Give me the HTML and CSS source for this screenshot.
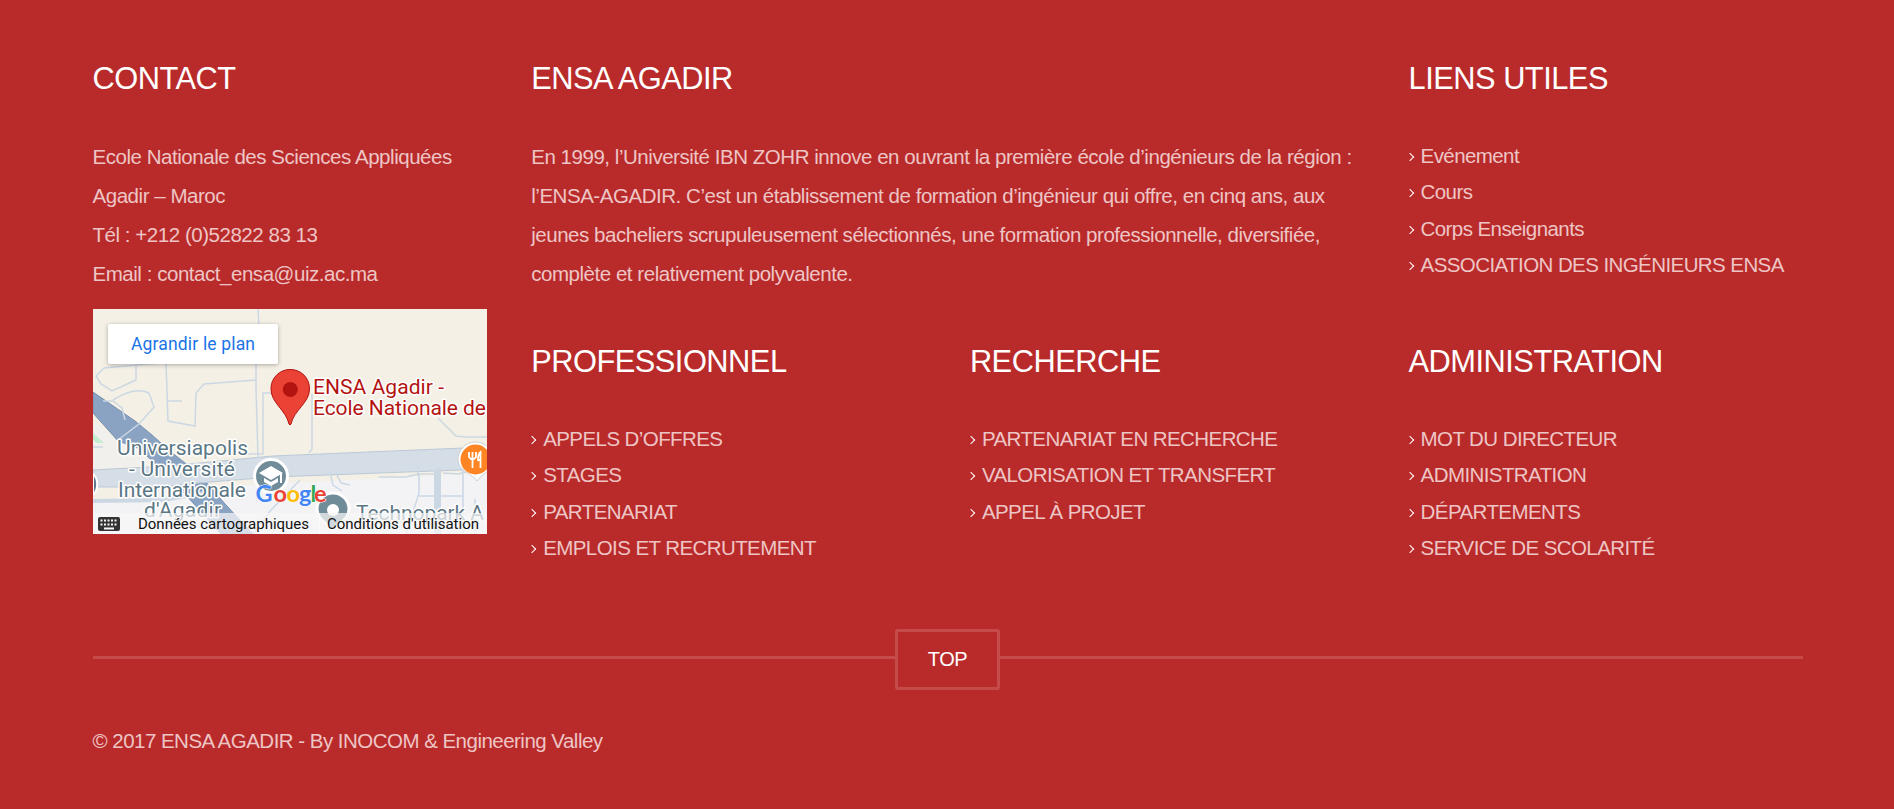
FILE: index.html
```html
<!DOCTYPE html>
<html lang="fr">
<head>
<meta charset="utf-8">
<title>ENSA Agadir</title>
<link rel="stylesheet" href="styles.css">
</head>
<body>
<footer class="footer">
  <div class="grid">
    <section class="contact">
      <h3>CONTACT</h3>
      <p>Ecole Nationale des Sciences Appliquées<br>Agadir – Maroc<br>Tél : +212 (0)52822 83 13<br>Email : contact_ensa@uiz.ac.ma</p>
      <svg class="map" viewBox="0 0 394 225" width="394" height="225">
        <rect width="394" height="225" fill="#f5f0e5"/>
        <path d="M0 194L115 178L394 164V225H0Z" fill="#f3f3f5"/>
        <path d="M0 112L10 119L29 133L60 150V154L0 163Z" fill="#f2f0ec"/>
        <path d="M0 124L11 134L4 134L0 131Z" fill="#c3eed2"/>
        <path d="M0 83L42 112L59 126L78 143L106 165L133 196L160 225H128L101 195L74 165L45 139L25 132L0 104Z" fill="#8aa3c2" stroke="#7891b1"/>
        <path d="M0 161L75 157L180 147L394 138V160L180 168L105 174L70 178L0 178Z" fill="#d5dde6" stroke="#bac9d7"/>
        <path d="M0 192L70 191L113 184M346 159V225M343 161V225" fill="none" stroke="#cbd7e3" stroke-width="4"/>
        <g fill="none" stroke="#cbd8e4" stroke-width="1.5">
          <path d="M165 0L166 18M163 54V80L165 149M67 54L11 59L3 67L8 75L19 82L43 71V57M73 54L75 112L102 117L103 84L111 75L163 71M75 92H89"/>
          <path d="M10 92H20L29 99L32 111M20 91Q42 77 56 84L61 98L46 115L25 131M178 84H170V145H154M219 85V140L216 144M345 109L363 127L373 128H394"/>
          <path d="M160 225L178 201L207 171M243 164L248 174L257 176M237 163L240 176L249 182M286 168H313L325 165H342M325 157V167M350 164L365 165L394 158M313 225L326 184V165M326 187H370V160M370 187V225M382 190V225M0 138H10"/>
        </g>
        <path d="M0 165Q5 169 4 178Q3 184 0 185Z" fill="#62798b" stroke="#fff" stroke-width="2"/>
        <circle cx="178" cy="167" r="16.5" fill="#718c99" stroke="#fff" stroke-width="3"/>
        <path d="M178 157L190 164L178 171L166 164ZM171 169V173L178 177L185 173V169L178 173Z" fill="#fff"/><path d="M188 165V174" stroke="#fff" stroke-width="2"/>
        <path d="M240 184A16 16 0 0 1 256 200C256 210 247 213 240 222C233 213 224 210 224 200A16 16 0 0 1 240 184Z" fill="#718c99" stroke="#fff" stroke-width="3"/>
        <circle cx="240" cy="201" r="6" fill="#fff"/>
        <path d="M382 133A17.5 17.5 0 0 1 400 151C400 162 389 164 384 172C380 165 365 162 365 151A17.5 17.5 0 0 1 382 133Z" fill="#fff" stroke="#cbd0d5"/>
        <circle cx="382.500" cy="150.500" r="15" fill="#ff8524"/>
        <path d="M376 143V148Q379.500 153 383 148V143M379.500 143V159M387.500 159V143Q385 145 385 151H388" fill="none" stroke="#fff" stroke-width="1.800"/>
        <g class="poi">
          <text x="24" y="146" textLength="131">Universiapolis</text>
          <text x="36" y="167" textLength="106">- Université</text>
          <text x="25" y="188" textLength="128">Internationale</text>
          <text x="51" y="208" textLength="77">d'Agadir</text>
          <text x="263" y="211" textLength="128">Technopark A</text>
        </g>
        <path d="M197 60.500A19 19 0 0 1 216.500 80C216.500 94 201 101 198 115Q197 117 196 115C193 101 178 94 178 80A19 19 0 0 1 197 60.500Z" fill="#ea4335" stroke="#b31412"/>
        <circle cx="197.300" cy="80.500" r="7.500" fill="#b31412"/>
        <g class="place">
          <text x="220" y="85" textLength="131">ENSA Agadir -</text>
          <text x="220" y="106" textLength="173">Ecole Nationale de</text>
        </g>
        <rect y="204" width="394" height="21" fill="#f7f7f7" opacity=".72"/>
        <g class="google">
          <text x="162.500" y="193" fill="#4285f4">G</text><text x="180.500" y="193" fill="#ea4335">o</text><text x="193.500" y="193" fill="#fbbc04">o</text><text x="206" y="193" fill="#4285f4">g</text><text x="217.500" y="193" fill="#34a853">l</text><text x="221" y="193" fill="#ea4335">e</text>
        </g>
        <rect x="5" y="208" width="22" height="14" rx="2" fill="#333"/>
        <path d="M7.500 211.500H25M7.500 215.500H25" stroke="#f7f7f7" stroke-width="2" stroke-dasharray="2 1.500"/><path d="M11 219.500H21" stroke="#f7f7f7" stroke-width="2"/>
        <path d="M226.500 204V225" stroke="#fff" stroke-opacity=".6"/>
        <g class="legal"><text x="45" y="220" textLength="171">Données cartographiques</text><text x="234" y="220" textLength="152">Conditions d'utilisation</text></g>
        <rect class="button" x="15" y="15" width="170" height="40" rx="2" fill="#fff"/>
        <text class="enlarge" x="38" y="41" textLength="124">Agrandir le plan</text>
      </svg>
    </section>
    <section class="about">
      <h3>ENSA AGADIR</h3>
      <p>En 1999, l’Université IBN ZOHR innove en ouvrant la première école d’ingénieurs de la région :<br>l’ENSA-AGADIR. C’est un établissement de formation d’ingénieur qui offre, en cinq ans, aux<br>jeunes bacheliers scrupuleusement sélectionnés, une formation professionnelle, diversifiée,<br>complète et relativement polyvalente.</p>
    </section>
    <section>
      <h3>LIENS UTILES</h3>
      <ul><li>Evénement</li><li>Cours</li><li>Corps Enseignants</li><li>ASSOCIATION DES INGÉNIEURS ENSA</li></ul>
    </section>
    <section>
      <h3>PROFESSIONNEL</h3>
      <ul><li>APPELS D’OFFRES</li><li>STAGES</li><li>PARTENARIAT</li><li>EMPLOIS ET RECRUTEMENT</li></ul>
    </section>
    <section>
      <h3>RECHERCHE</h3>
      <ul><li>PARTENARIAT EN RECHERCHE</li><li>VALORISATION ET TRANSFERT</li><li>APPEL À PROJET</li></ul>
    </section>
    <section>
      <h3>ADMINISTRATION</h3>
      <ul><li>MOT DU DIRECTEUR</li><li>ADMINISTRATION</li><li>DÉPARTEMENTS</li><li>SERVICE DE SCOLARITÉ</li></ul>
    </section>
  </div>
  <div class="divider"><a class="top">TOP</a></div>
  <div class="copyright">© 2017 ENSA AGADIR - By INOCOM &amp; Engineering Valley</div>
</footer>
</body>
</html>
```
FILE: styles.css
```css
* { box-sizing: border-box; }
body { margin: 0; background: #b92b2b; }
.footer {
  height: 809px;
  padding: 59px 91.5px 0 92.5px;
  font: 20.5px/39px "Liberation Sans", Arial, sans-serif;
  letter-spacing: -.46px;
  color: #eec5c5;
}
.grid {
  display: grid;
  grid-template-columns: repeat(4, 394px);
  grid-template-rows: 283px 287px;
  column-gap: 44.7px;
}
.contact { grid-row: span 2; }
.about { grid-column: span 2; }
h3 {
  margin: 0 0 39px;
  font-size: 30.8px;
  line-height: 39px;
  font-weight: 400;
  letter-spacing: -.5px;
  color: #fff;
}
p { margin: 0; white-space: nowrap; }
ul { margin: 0; padding: 0; list-style: none; letter-spacing: -.58px; }
li { display: flex; align-items: center; height: 36.5px; white-space: nowrap; }
li::before {
  content: "";
  width: 5px;
  height: 5px;
  margin: 3px 8px 0 -2px;
  border: solid #fff;
  border-width: 1.5px 1.5px 0 0;
  transform: rotate(45deg);
}
.map { display: block; margin-top: 16px; font-family: Roboto, sans-serif; letter-spacing: 0; }
.poi, .place { font-size: 21px; paint-order: stroke; stroke: #fff; stroke-width: 3px; stroke-linejoin: round; }
.poi { fill: #5b7785; }
.place { fill: #b31412; }
.legal { font-size: 15px; fill: #111; }
.google { font: 700 23.5px Lato, sans-serif; paint-order: stroke; stroke: #fff; stroke-width: 1px; }
.button { filter: drop-shadow(0 1px 2px rgba(0, 0, 0, .3)); }
.enlarge { font-size: 17.5px; fill: #1a73e8; }
.divider {
  display: flex;
  justify-content: center;
  align-items: center;
  height: 61px;
}
.divider::before, .divider::after { content: ""; flex: 1; height: 3px; margin-bottom: 4px; background: #c54b4b; }
.top {
  width: 105px;
  height: 61px;
  border: 3px solid #c54b4b;
  border-radius: 3px;
  font-size: 20px;
  line-height: 55px;
  text-align: center;
  color: #fff;
}
.copyright { margin-top: 31px; letter-spacing: -.52px; }
```
